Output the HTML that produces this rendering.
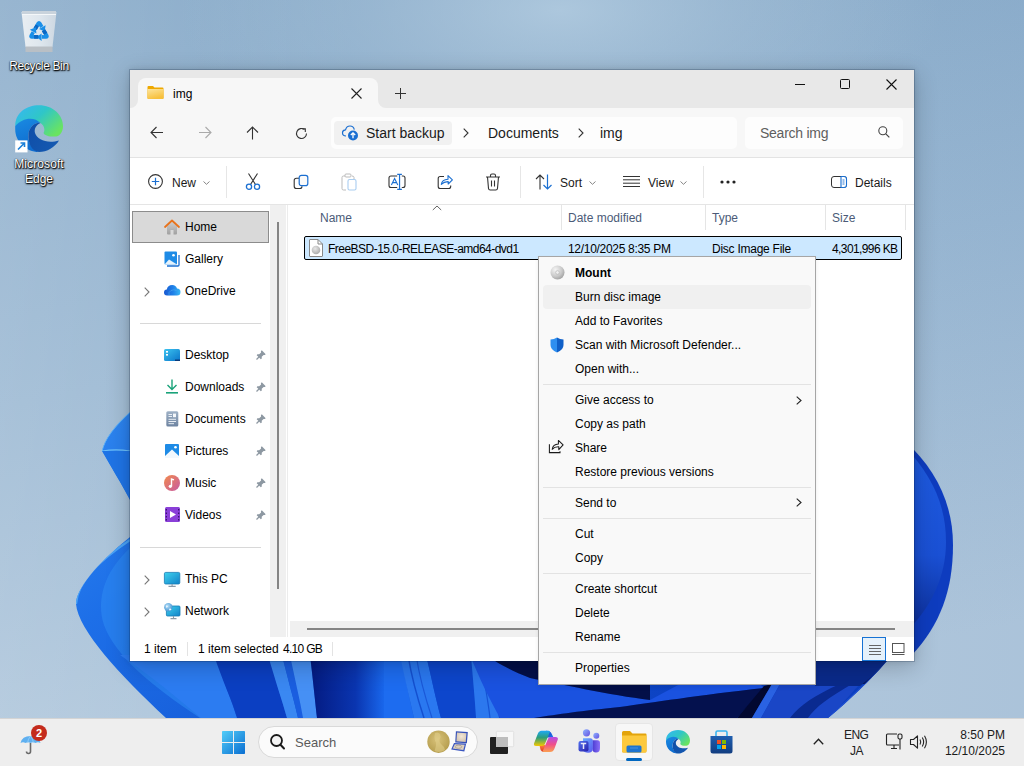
<!DOCTYPE html>
<html><head><meta charset="utf-8">
<style>
*{margin:0;padding:0;box-sizing:border-box}
html,body{width:1024px;height:766px;overflow:hidden}
body{position:relative;font-family:"Liberation Sans",sans-serif;font-size:12px;color:#1a1a1a;background:#9db8d1}
.a{position:absolute}
.t{position:absolute;white-space:nowrap;line-height:14px}
svg{position:absolute;overflow:visible}
#bg{left:0;top:0;width:1024px;height:766px}
#win{left:129px;top:69px;width:786px;height:593px;background:#fff;background-clip:padding-box;border:1px solid rgba(0,20,50,0.2);box-shadow:0 6px 22px rgba(0,0,0,0.2),0 0 6px rgba(0,0,0,0.1)}
#menu{left:538px;top:256px;width:278px;height:429px;background:#f9f9f9;border:1px solid #a6a6a6;box-shadow:0 2px 4px rgba(0,0,0,0.08)}
#taskbar{left:0;top:718px;width:1024px;height:48px;background:#eeeeee;border-top:1px solid #d4d4d4}
.dtxt{color:#fff;text-shadow:0 0 1px #000,0 1px 2px #000,1px 1px 1px rgba(0,0,0,0.85);font-size:12px;text-align:center}
</style></head><body>
<!-- desktop background -->
<svg id="bg" width="1024" height="766" viewBox="0 0 1024 766">
  <defs>
    <linearGradient id="dg" x1="0" y1="0" x2="0.25" y2="1">
      <stop offset="0" stop-color="#86a9c8"/>
      <stop offset="0.5" stop-color="#99b7d2"/>
      <stop offset="1" stop-color="#b0c7dc"/>
    </linearGradient>
    <linearGradient id="bl" x1="0" y1="0" x2="1" y2="0.6">
      <stop offset="0" stop-color="#3a96f5"/>
      <stop offset="0.35" stop-color="#1d6fe8"/>
      <stop offset="1" stop-color="#0b3fc0"/>
    </linearGradient>
    <linearGradient id="dk" x1="0" y1="0" x2="1" y2="0">
      <stop offset="0" stop-color="#0a2f9e"/>
      <stop offset="1" stop-color="#020a45"/>
    </linearGradient>
    <linearGradient id="dk2" x1="0" y1="0" x2="1" y2="0">
      <stop offset="0" stop-color="#041a80"/>
      <stop offset="0.6" stop-color="#0a35b0"/>
      <stop offset="1" stop-color="#1a6af0"/>
    </linearGradient>
    <linearGradient id="rp" x1="0" y1="0" x2="0" y2="1">
      <stop offset="0" stop-color="#1e5be0"/>
      <stop offset="0.6" stop-color="#1a50d4"/>
      <stop offset="1" stop-color="#0c2f9a"/>
    </linearGradient>
    <radialGradient id="glow" cx="560" cy="10" r="380" gradientUnits="userSpaceOnUse" gradientTransform="translate(560 10) scale(1 0.45) translate(-560 -10)">
      <stop offset="0" stop-color="#b0cadf" stop-opacity="0.9"/>
      <stop offset="0.5" stop-color="#a6c1d8" stop-opacity="0.5"/>
      <stop offset="1" stop-color="#a6c1d8" stop-opacity="0"/>
    </radialGradient>
    <linearGradient id="lx" x1="0" y1="0" x2="1" y2="0">
      <stop offset="0" stop-color="#ffffff" stop-opacity="0.15"/>
      <stop offset="0.35" stop-color="#ffffff" stop-opacity="0"/>
      <stop offset="1" stop-color="#3060a0" stop-opacity="0.04"/>
    </linearGradient>
    <linearGradient id="ws" x1="0" y1="0" x2="1" y2="0">
      <stop offset="0" stop-color="#000" stop-opacity="0"/>
      <stop offset="1" stop-color="#000" stop-opacity="0.12"/>
    </linearGradient>
  </defs>
  <rect width="1024" height="766" fill="url(#dg)"/>
  <rect width="1024" height="766" fill="url(#lx)"/>
  <rect width="1024" height="400" fill="url(#glow)"/>
  <!-- right petal -->
  <path d="M904 440 C937 470 953 505 953 545 C953 590 940 625 912 655 L600 655 L600 440 Z" fill="#0e3cbf"/>
  <path d="M904 446 C932 475 946 505 946 542 C946 575 932 605 910 628 L600 628 L600 446 Z" fill="url(#rp)"/>
  <!-- main bloom -->
  <clipPath id="bclip"><path d="M130 412 C115 425 104 440 102 451 C110 465 122 485 130 500 L130 537 C95 565 76 590 76 604 C78 630 120 675 166 718 L828 718 C850 700 870 680 887 661 L700 300 L130 300 Z"/></clipPath>
  <path d="M130 412 C115 425 104 440 102 451 C110 465 122 485 130 500 L130 537 C95 565 76 590 76 604 C78 630 120 675 166 718 L828 718 C850 700 870 680 887 661 L700 300 L130 300 Z" fill="url(#bl)"/>
  <g clip-path="url(#bclip)">
    <path d="M130 451 C118 449 108 450 102 451 C104 440 115 425 130 412" fill="none" stroke="#6cc0fa" stroke-width="1.2"/>
    <path d="M102 451 C110 465 122 485 130 500 L140 500 L140 451 Z" fill="#1f74e6"/>
    <path d="M76 604 C78 580 100 560 130 540" fill="none" stroke="#56b0fa" stroke-width="2.2" opacity="0.8"/>
    <path d="M130 548 C104 572 96 600 104 625 C115 655 150 685 200 718 L240 718 C190 690 140 650 130 620 Z" fill="#2d88f2" opacity="0.6"/>
    <!-- bottom strip -->
    <path d="M120 655 L216 655 C222 680 232 700 237 718 L201 718 C180 700 150 675 120 655 Z" fill="#2c7cf1"/>
    <path d="M214 655 L270 655 C275 680 282 700 287 718 L237 718 C232 700 222 680 214 655 Z" fill="#0b3fc2"/>
    <path d="M268 655 L282 655 C288 680 294 700 298 718 L287 718 C282 700 275 680 268 655 Z" fill="#3a88f2"/>
    <path d="M282 655 L290 655 C295 680 300 700 303 718 L298 718 C294 700 288 680 282 655 Z" fill="#1a5ee0"/>
    <path d="M290 655 L310 655 C313 680 315 700 317 718 L303 718 C300 700 295 680 290 655 Z" fill="#4690f5"/>
    <path d="M310 655 L386 655 L386 718 L317 718 C315 700 313 680 310 655 Z" fill="url(#dk2)"/>
    <path d="M384 655 L402 655 C405 680 410 700 414 718 L384 718 Z" fill="#1d6cf0"/>
    <path d="M400 655 L426 655 C432 680 436 700 441 718 L414 718 C410 700 405 680 400 655 Z" fill="#2a78f0"/>
    <path d="M408 655 C412 680 418 700 424 718" stroke="#1450d0" stroke-width="1.5" fill="none"/>
    <path d="M416 655 C420 680 426 700 432 718" stroke="#1a58d8" stroke-width="1.2" fill="none"/>
    <path d="M426 655 L471 655 C473 680 475 700 476 718 L441 718 C436 700 432 680 426 655 Z" fill="#0d46cc"/>
    <path d="M471 655 L489 655 C492 680 496 700 499 718 L476 718 C475 700 473 680 471 655 Z" fill="#2c78ee"/>
    <path d="M480 655 C484 680 488 700 490 718" stroke="#1654d4" stroke-width="1.2" fill="none"/>
    <path d="M470 655 L487 655 C495 662 510 670 530 678 C560 684 610 695 650 700 L680 684 L760 684 L764 688 C700 695 650 703 620 707 C580 711 560 714 534 718 L500 718 C490 700 480 680 470 655 Z" fill="#1a52e0"/>
    <path d="M487 655 L890 655 L870 684 L650 684 L650 700 C610 695 560 684 530 678 C510 670 495 662 487 655 Z" fill="#030f48"/>
    <path d="M534 718 C560 714 580 711 620 707 C650 703 700 695 764 688 L737 718 Z" fill="#04114e"/>
    <path d="M737 718 L764 686 L772 684 L752 718 Z" fill="#020830"/>
    <path d="M752 718 L772 684 L780 684 L761 718 Z" fill="#2a62e2"/>
    <path d="M761 718 L780 684 L860 684 L829 718 Z" fill="#1a46c6"/>
    <path d="M790 718 C800 705 815 695 840 684 L852 684 C830 697 815 707 808 718 Z" fill="#0a2a90"/>
    <path d="M815 661 L887 661 C878 672 868 680 860 686 L815 686 Z" fill="#0a2a8a"/>
    <path d="M887 661 C860 690 840 705 828 718 L834 718 C850 700 870 680 892 661 Z" fill="#2050d0"/>
  </g>
  <!-- shadow around window -->
</svg>

<!-- desktop icons -->
<div class="a" style="left:0;top:0;width:78px;height:80px">
  <svg width="78" height="80" viewBox="0 0 78 80">
    <defs><linearGradient id="bing" x1="0" y1="0" x2="1" y2="0"><stop offset="0" stop-color="#e9eef2"/><stop offset="0.5" stop-color="#dfe7ee"/><stop offset="1" stop-color="#cdd8e2"/></linearGradient></defs>
    <path d="M21.5 12 L56.5 12 L52.5 47 L25.5 47 Z" fill="url(#bing)"/>
    <path d="M22 11 L56 11 L56 14.5 L22 14.5 Z" fill="#c9d3dc"/>
    <path d="M22 14.5 L56 14.5" stroke="#f4f7f9" stroke-width="1"/>
    <rect x="25.5" y="46.5" width="27" height="5.5" fill="#b9bfc5"/>
    <g>
      <path d="M35.2 29 L38.2 23.5 Q39 22.2 39.8 23.5 L41.8 27" stroke="#1a8fe8" stroke-width="3.6" fill="none"/>
      <path d="M35.2 29 L37.2 25.3" stroke="#0b68c4" stroke-width="3.8" fill="none"/>
      <path d="M45.6 25.2 L39 29 L44.6 31.6 Z" fill="#1a8fe8"/>
    </g>
    <g transform="rotate(120 39 32)">
      <path d="M35.2 29 L38.2 23.5 Q39 22.2 39.8 23.5 L41.8 27" stroke="#1a8fe8" stroke-width="3.6" fill="none"/>
      <path d="M35.2 29 L37.2 25.3" stroke="#0b68c4" stroke-width="3.8" fill="none"/>
      <path d="M45.6 25.2 L39 29 L44.6 31.6 Z" fill="#1a8fe8"/>
    </g>
    <g transform="rotate(240 39 32)">
      <path d="M35.2 29 L38.2 23.5 Q39 22.2 39.8 23.5 L41.8 27" stroke="#1a8fe8" stroke-width="3.6" fill="none"/>
      <path d="M35.2 29 L37.2 25.3" stroke="#0b68c4" stroke-width="3.8" fill="none"/>
      <path d="M45.6 25.2 L39 29 L44.6 31.6 Z" fill="#1a8fe8"/>
    </g>
  </svg>
  <div class="t dtxt" style="left:0;top:59px;width:78px;letter-spacing:-0.35px">Recycle Bin</div>
</div>
<div class="a" style="left:0;top:100px;width:78px;height:90px">
  <svg style="left:12px;top:2px" width="54" height="54" viewBox="0 0 54 54">
    <defs>
      <linearGradient id="eg1" x1="0" y1="0" x2="1" y2="0.7"><stop offset="0" stop-color="#36b6f6"/><stop offset="0.5" stop-color="#2fc6c8"/><stop offset="1" stop-color="#6ae460"/></linearGradient>
      <linearGradient id="eg2" x1="0" y1="0" x2="0.3" y2="1"><stop offset="0" stop-color="#1a8ae2"/><stop offset="1" stop-color="#0e6ccf"/></linearGradient>
      <linearGradient id="eg3" x1="0" y1="0" x2="1" y2="0.5"><stop offset="0" stop-color="#0f4ea8"/><stop offset="1" stop-color="#1458b0"/></linearGradient>
    </defs>
    <path d="M3.2 24 C3.2 11 14 3.2 27 3.2 C41 3.2 51 13 51 24 C51 30 48 34 44 34.5 C39 35 33 34 31.5 31 C33 29 33 24 28.5 21 C23 17 12 18 3.2 24 Z" fill="url(#eg1)"/>
    <path d="M3.2 24 C10 16 22 14 28.5 21 C24 20 18 24 16.5 31 C15 40 20 47 27 50 C14 50 3.2 40 3.2 27 Z" fill="url(#eg2)"/>
    <path d="M16.5 31 C18 24 24 20 28.5 21 C24 23 22 27 23 31 C25 38 36 42 47 38.4 C43 45 35 50 27 50 C20 49 15.5 42 16.5 31 Z" fill="url(#eg3)"/>
    <rect x="3.2" y="38.4" width="12.3" height="12" fill="#fff"/>
    <path d="M6 47.5 L12.5 41 M8.5 41 L12.5 41 L12.5 45" stroke="#1a7fd8" stroke-width="1.6" fill="none"/>
  </svg>
  <div class="t dtxt" style="left:0;top:57px;width:78px;letter-spacing:0.1px">Microsoft</div>
  <div class="t dtxt" style="left:0;top:72px;width:78px">Edge</div>
</div>

<!-- explorer window -->
<div id="win" class="a"></div>
<div class="a" style="left:130px;top:70px;width:784px;height:38px;background:#e8e8e8"></div>
<div class="a" style="left:130px;top:100px;width:256px;height:8px;background:#f7f7f7"></div>
<div class="a" style="left:130px;top:98px;width:8px;height:10px;background:#e8e8e8;border-radius:0 0 8px 0"></div>
<div class="a" style="left:378px;top:98px;width:8px;height:10px;background:#e8e8e8;border-radius:0 0 0 8px"></div>
<div class="a" style="left:138px;top:78px;width:240px;height:30px;background:#f7f7f7;border-radius:8px 8px 0 0"></div>
<!-- tab folder icon -->
<svg style="left:147px;top:85px" width="17" height="15" viewBox="0 0 17 15"><defs><linearGradient id="fdg" x1="0" y1="0" x2="0.4" y2="1"><stop offset="0" stop-color="#fde49a"/><stop offset="1" stop-color="#f7c03c"/></linearGradient></defs>
  <path d="M0.5 2 Q0.5 1 1.5 1 L6 1 L7.5 2.5 L15.5 2.5 Q16.5 2.5 16.5 3.5 L16.5 13 Q16.5 14 15.5 14 L1.5 14 Q0.5 14 0.5 13 Z" fill="#eea800"/>
  <path d="M0.5 4 L16.5 4 L16.5 13 Q16.5 14 15.5 14 L1.5 14 Q0.5 14 0.5 13 Z" fill="url(#fdg)"/>
</svg>
<div class="t" style="left:173px;top:87px;font-size:12px;color:#000">img</div>
<svg style="left:351px;top:88px" width="11" height="11" viewBox="0 0 11 11"><path d="M0.5 0.5 L10.5 10.5 M10.5 0.5 L0.5 10.5" stroke="#222" stroke-width="1.1"/></svg>
<svg style="left:395px;top:88px" width="11" height="11" viewBox="0 0 11 11"><path d="M5.5 0 L5.5 11 M0 5.5 L11 5.5" stroke="#333" stroke-width="1"/></svg>
<!-- window controls -->
<div class="a" style="left:795px;top:84px;width:10px;height:1px;background:#111"></div>
<div class="a" style="left:840px;top:79px;width:10px;height:10px;border:1px solid #111;border-radius:1.5px"></div>
<svg style="left:886px;top:79px" width="11" height="11" viewBox="0 0 11 11"><path d="M0.5 0.5 L10.5 10.5 M10.5 0.5 L0.5 10.5" stroke="#111" stroke-width="1.1"/></svg>

<!-- address row -->
<div class="a" style="left:130px;top:108px;width:784px;height:49px;background:#f7f7f7"></div>
<div class="a" style="left:130px;top:157px;width:784px;height:1px;background:#e3e3e3"></div>
<svg style="left:150px;top:126px" width="14" height="13" viewBox="0 0 14 13"><path d="M13 6.5 L1 6.5 M6.5 1 L1 6.5 L6.5 12" stroke="#333" stroke-width="1.1" fill="none"/></svg>
<svg style="left:198px;top:126px" width="14" height="13" viewBox="0 0 14 13"><path d="M1 6.5 L13 6.5 M7.5 1 L13 6.5 L7.5 12" stroke="#aaa" stroke-width="1.1" fill="none"/></svg>
<svg style="left:246px;top:126px" width="13" height="14" viewBox="0 0 13 14"><path d="M6.5 13.5 L6.5 1 M1 6.5 L6.5 1 L12 6.5" stroke="#333" stroke-width="1.1" fill="none"/></svg>
<svg style="left:295px;top:127px" width="13" height="13" viewBox="0 0 13 13"><path d="M11.5 6.5 A5 5 0 1 1 9.5 2.5" stroke="#333" stroke-width="1.1" fill="none"/><path d="M7 1.8 L10.3 1.8 L10.3 5" stroke="#333" stroke-width="1.1" fill="none"/></svg>
<div class="a" style="left:331px;top:117px;width:406px;height:32px;background:#fdfdfd;border-radius:5px"></div>
<div class="a" style="left:334px;top:121px;width:118px;height:24px;background:#f1f1f1;border-radius:4px"></div>
<svg style="left:342px;top:124px" width="17" height="17" viewBox="0 0 17 17">
  <path d="M4 12 Q0.5 12 0.5 8.8 Q0.5 6 3.5 5.8 Q4.5 2 8 2 Q11.5 2 12.3 5.6" stroke="#1b6fd1" stroke-width="1.2" fill="none"/>
  <circle cx="11" cy="11.5" r="5" fill="#1b6fd1"/>
  <path d="M11 14.2 L11 9 M8.8 11 L11 8.8 L13.2 11" stroke="#fff" stroke-width="1.3" fill="none"/>
</svg>
<div class="t" style="left:366px;top:125px;font-size:14px;line-height:16px;color:#1a1a1a">Start backup</div>
<svg style="left:463px;top:128px" width="6" height="10" viewBox="0 0 6 10"><path d="M0.7 0.7 L5 5 L0.7 9.3" stroke="#333" stroke-width="1.1" fill="none"/></svg>
<div class="t" style="left:488px;top:125px;font-size:14px;line-height:16px;color:#1a1a1a">Documents</div>
<svg style="left:578px;top:128px" width="6" height="10" viewBox="0 0 6 10"><path d="M0.7 0.7 L5 5 L0.7 9.3" stroke="#333" stroke-width="1.1" fill="none"/></svg>
<div class="t" style="left:600px;top:125px;font-size:14px;line-height:16px;color:#1a1a1a">img</div>
<div class="a" style="left:745px;top:117px;width:158px;height:32px;background:#fdfdfd;border-radius:5px"></div>
<div class="t" style="left:760px;top:125px;font-size:14px;line-height:16px;color:#5f5f5f;letter-spacing:-0.25px">Search img</div>
<svg style="left:878px;top:126px" width="12" height="12" viewBox="0 0 12 12"><circle cx="4.8" cy="4.8" r="4" stroke="#444" stroke-width="1.1" fill="none"/><path d="M7.8 7.8 L11.3 11.3" stroke="#444" stroke-width="1.2"/></svg>

<!-- toolbar -->
<div class="a" style="left:130px;top:158px;width:784px;height:46px;background:#ffffff"></div>
<div class="a" style="left:130px;top:204px;width:784px;height:1px;background:#e5e5e5"></div>
<!-- toolbar items -->
<svg style="left:148px;top:174px" width="15" height="15" viewBox="0 0 15 15"><circle cx="7.5" cy="7.5" r="6.9" stroke="#333" stroke-width="1.1" fill="none"/><path d="M7.5 3.8 L7.5 11.2 M3.8 7.5 L11.2 7.5" stroke="#1b6fd1" stroke-width="1.2"/></svg>
<div class="t" style="left:172px;top:176px">New</div>
<svg style="left:203px;top:181px" width="7" height="4" viewBox="0 0 7 4"><path d="M0.5 0.5 L3.5 3.3 L6.5 0.5" stroke="#777" stroke-width="0.9" fill="none"/></svg>
<div class="a" style="left:226px;top:166px;width:1px;height:32px;background:#e6e6e6"></div>
<svg style="left:245px;top:173px" width="16" height="17" viewBox="0 0 16 17"><path d="M3.5 0.5 L10.5 11.5 M12.5 0.5 L5.5 11.5" stroke="#333" stroke-width="1.1"/><circle cx="4" cy="13.7" r="2.6" stroke="#1b6fd1" stroke-width="1.3" fill="#fff"/><circle cx="12" cy="13.7" r="2.6" stroke="#1b6fd1" stroke-width="1.3" fill="#fff"/></svg>
<svg style="left:293px;top:173px" width="16" height="17" viewBox="0 0 16 17"><path d="M6 5.3 L3.5 5.3 Q1.2 5.3 1.2 7.6 L1.2 13.2 Q1.2 15.5 3.5 15.5 L6.8 15.5 Q9 15.5 9 13.2" stroke="#333" stroke-width="1.1" fill="none"/><rect x="6.2" y="2.3" width="8.6" height="10.3" rx="2.2" stroke="#1b6fd1" stroke-width="1.2" fill="#fafafa"/></svg>
<svg style="left:341px;top:173px" width="16" height="18" viewBox="0 0 16 18"><path d="M4 3 L2.5 3 Q1 3 1 4.5 L1 15.5 Q1 17 2.5 17 L5 17" stroke="#bbb" stroke-width="1" fill="none"/><rect x="4" y="1" width="6" height="3" rx="1" stroke="#bbb" stroke-width="1" fill="none"/><path d="M11 3 Q13 3 13 4.5 L13 6" stroke="#bbb" stroke-width="1" fill="none"/><rect x="7" y="6.5" width="8" height="10.5" rx="1.5" stroke="#a9cdf0" stroke-width="1.1" fill="#fff"/></svg>
<svg style="left:388px;top:173px" width="18" height="18" viewBox="0 0 18 18"><path d="M9.2 3 L3 3 Q1 3 1 5 L1 12.5 Q1 14.5 3 14.5 L9.2 14.5 M13.8 3 L15 3 Q17 3 17 5 L17 12.5 Q17 14.5 15 14.5 L13.8 14.5" stroke="#333" stroke-width="1.1" fill="none"/><path d="M9.2 1.3 L13.9 1.3 M11.55 1.3 L11.55 16.4 M9.2 16.4 L13.9 16.4" stroke="#1b6fd1" stroke-width="1.2"/><path d="M3.4 11.9 L6.6 5.5 L9.8 11.9 M4.6 9.6 L8.6 9.6" stroke="#1b6fd1" stroke-width="1.1" fill="none"/></svg>
<svg style="left:437px;top:173px" width="17" height="17" viewBox="0 0 17 17"><path d="M7 3.5 L3.2 3.5 Q1.2 3.5 1.2 5.5 L1.2 13.5 Q1.2 15.5 3.2 15.5 L11.7 15.5 Q13.7 15.5 13.7 13.5 L13.7 12.6" stroke="#333" stroke-width="1.1" fill="none"/><path d="M4.3 11.4 Q5 6.5 11 6.2 L11 2.6 L15.4 6.8 L11.2 11 L11.2 8.6 Q7 8.5 4.3 11.4 Z" stroke="#1b6fd1" stroke-width="1.1" fill="none" stroke-linejoin="round"/></svg>
<svg style="left:485px;top:173px" width="16" height="18" viewBox="0 0 16 18"><path d="M1 4 L15 4 M5.5 4 L5.5 2.5 Q5.5 1 7 1 L9 1 Q10.5 1 10.5 2.5 L10.5 4 M2.5 4 L3.5 15.5 Q3.7 17 5.2 17 L10.8 17 Q12.3 17 12.5 15.5 L13.5 4 M6.5 7.5 L6.5 13.5 M9.5 7.5 L9.5 13.5" stroke="#333" stroke-width="1.1" fill="none"/></svg>
<div class="a" style="left:520px;top:166px;width:1px;height:32px;background:#e6e6e6"></div>
<svg style="left:535px;top:174px" width="18" height="16" viewBox="0 0 18 16"><path d="M5 15.5 L5 1 M1 5 L5 1 L9 5" stroke="#333" stroke-width="1.1" fill="none"/><path d="M12.5 0.5 L12.5 15 M8.5 11 L12.5 15 L16.5 11" stroke="#1b6fd1" stroke-width="1.2" fill="none"/></svg>
<div class="t" style="left:560px;top:176px">Sort</div>
<svg style="left:589px;top:181px" width="7" height="4" viewBox="0 0 7 4"><path d="M0.5 0.5 L3.5 3.3 L6.5 0.5" stroke="#777" stroke-width="0.9" fill="none"/></svg>
<svg style="left:623px;top:176px" width="17" height="12" viewBox="0 0 17 12"><path d="M0 0.5 L17 0.5 M0 3.8 L17 3.8 M0 7.2 L17 7.2 M0 10.5 L17 10.5" stroke="#333" stroke-width="1"/></svg>
<div class="t" style="left:648px;top:176px">View</div>
<svg style="left:680px;top:181px" width="7" height="4" viewBox="0 0 7 4"><path d="M0.5 0.5 L3.5 3.3 L6.5 0.5" stroke="#777" stroke-width="0.9" fill="none"/></svg>
<div class="a" style="left:703px;top:166px;width:1px;height:32px;background:#e6e6e6"></div>
<svg style="left:720px;top:180px" width="16" height="4" viewBox="0 0 16 4"><circle cx="2" cy="2" r="1.6" fill="#222"/><circle cx="8" cy="2" r="1.6" fill="#222"/><circle cx="14" cy="2" r="1.6" fill="#222"/></svg>
<svg style="left:831px;top:176px" width="16" height="12" viewBox="0 0 16 12"><rect x="0.5" y="0.5" width="15" height="11" rx="2.5" stroke="#333" stroke-width="1" fill="none"/><path d="M10 0.5 L13 0.5 Q15.5 0.5 15.5 3 L15.5 9 Q15.5 11.5 13 11.5 L10 11.5 Z" stroke="#1b6fd1" stroke-width="1.1" fill="#fff"/><path d="M11.5 4 L13.5 4 M11.5 6 L13.5 6 M11.5 8 L13.5 8" stroke="#1b6fd1" stroke-width="0.9"/></svg>
<div class="t" style="left:855px;top:176px">Details</div>

<!-- body -->
<div class="a" style="left:270px;top:205px;width:16px;height:432px;background:#f0f0f0"></div>
<div class="a" style="left:277px;top:222px;width:2px;height:367px;background:#858585"></div>
<div class="a" style="left:287px;top:205px;width:1px;height:432px;background:#ececec"></div>
<div class="a" style="left:290px;top:621px;width:624px;height:16px;background:#f0f0f0"></div>
<div class="a" style="left:307px;top:628px;width:588px;height:2px;background:#858585"></div>
<!-- nav pane -->
<div class="a" style="left:132px;top:211px;width:137px;height:32px;background:#d9d9d9;border:1px solid #8c8c8c"></div>
<svg style="left:164px;top:219px" width="16" height="16" viewBox="0 0 16 16"><defs><linearGradient id="hg" x1="0" y1="0" x2="0" y2="1"><stop offset="0" stop-color="#d0d0d0"/><stop offset="1" stop-color="#a0a0a0"/></linearGradient></defs><path d="M3 7 L3 14.5 Q3 15.5 4 15.5 L6.5 15.5 L6.5 11 L9.5 11 L9.5 15.5 L12 15.5 Q13 15.5 13 14.5 L13 7 L8 2.5 Z" fill="url(#hg)"/><path d="M1 8 L8 1.5 L15 8" stroke="#e8731c" stroke-width="1.8" fill="none" stroke-linecap="round" stroke-linejoin="round"/></svg>
<div class="t" style="left:185px;top:220px;color:#000">Home</div>
<svg style="left:164px;top:251px" width="16" height="16" viewBox="0 0 16 16"><path d="M3 15 L14 15 Q15 15 15 14 L15 4" stroke="#1b6fd1" stroke-width="1.3" fill="none"/><rect x="0.5" y="0.5" width="12.5" height="13" rx="1" fill="#1e8be6"/><path d="M0.5 13.5 L5 8.5 L9 11 L13 13.5 Z" fill="#e6f2fb"/><circle cx="9.5" cy="4.2" r="1.3" fill="#fff"/></svg>
<div class="t" style="left:185px;top:252px;color:#000">Gallery</div>
<svg style="left:144px;top:287px" width="6" height="10" viewBox="0 0 6 10"><path d="M0.7 0.7 L5 5 L0.7 9.3" stroke="#777" stroke-width="1.1" fill="none"/></svg>
<svg style="left:164px;top:284px" width="17" height="12" viewBox="0 0 17 12"><defs><linearGradient id="odg" x1="0" y1="0" x2="1" y2="0"><stop offset="0" stop-color="#1858d0"/><stop offset="0.55" stop-color="#1e80e8"/><stop offset="1" stop-color="#38b8f5"/></linearGradient></defs><path d="M3 11.5 Q0 11.5 0 8.5 Q0 5.8 2.8 5.6 Q3.6 1 8.2 1 Q12 1 13 4.5 Q16.5 4.8 16.5 8 Q16.5 11.5 13 11.5 Z" fill="url(#odg)"/><path d="M5 11.5 Q4 8 7 6.5 Q10 5 12.5 6.5" stroke="#5ab0f0" stroke-width="0.8" fill="none" opacity="0.6"/></svg>
<div class="t" style="left:185px;top:284px;color:#000">OneDrive</div>
<div class="a" style="left:140px;top:323px;width:121px;height:1px;background:#d8d8d8"></div>

<svg style="left:164px;top:349px" width="16" height="12" viewBox="0 0 16 12"><defs><linearGradient id="dkg" x1="0" y1="0" x2="1" y2="1"><stop offset="0" stop-color="#3cc4f0"/><stop offset="1" stop-color="#0a74c9"/></linearGradient></defs><rect x="0" y="0" width="16" height="12" rx="1.5" fill="url(#dkg)"/><rect x="2" y="2" width="2" height="1.6" fill="#fff"/><rect x="2" y="5" width="2" height="1.6" fill="#fff"/><rect x="11" y="10.5" width="5" height="1.5" fill="#0a3a7a"/></svg>
<div class="t" style="left:185px;top:348px;color:#000">Desktop</div>
<svg style="left:165px;top:379px" width="14" height="15" viewBox="0 0 14 15"><path d="M7 0.5 L7 10.5 M2.5 6 L7 10.5 L11.5 6" stroke="#1aa37a" stroke-width="1.4" fill="none"/><rect x="1" y="13" width="12" height="1.6" fill="#1aa37a"/></svg>
<div class="t" style="left:185px;top:380px;color:#000">Downloads</div>
<svg style="left:166px;top:411px" width="13" height="16" viewBox="0 0 13 16"><defs><linearGradient id="dcg" x1="0" y1="0" x2="0" y2="1"><stop offset="0" stop-color="#9fb1c6"/><stop offset="1" stop-color="#6d83a0"/></linearGradient></defs><rect x="0.3" y="0.3" width="12" height="15.2" rx="1.5" fill="url(#dcg)"/><path d="M2.5 3.5 L6 3.5 M2.5 5.5 L6 5.5 M2.5 8.3 L10 8.3 M2.5 10.5 L10 10.5 M2.5 12.7 L8 12.7" stroke="#f4f7fa" stroke-width="0.9"/><rect x="7" y="2.6" width="3" height="3.6" fill="#f4f7fa"/></svg>
<div class="t" style="left:185px;top:412px;color:#000">Documents</div>
<svg style="left:165px;top:444px" width="14" height="14" viewBox="0 0 14 14"><rect x="0" y="0" width="14" height="14" rx="1" fill="#1e8be6"/><path d="M0 14 L0 12 L7 5.5 L14 12 L14 14 Z" fill="#f2f8fd"/><circle cx="10.5" cy="3.3" r="1.3" fill="#fff"/></svg>
<div class="t" style="left:185px;top:444px;color:#000">Pictures</div>
<svg style="left:164px;top:475px" width="16" height="16" viewBox="0 0 16 16"><defs><linearGradient id="mg" x1="0" y1="0" x2="1" y2="1"><stop offset="0" stop-color="#f28a4c"/><stop offset="1" stop-color="#c75aa3"/></linearGradient></defs><circle cx="8" cy="8" r="8" fill="url(#mg)"/><path d="M7.5 11.5 L7.5 4 L10 4.8" stroke="#fff" stroke-width="1.4" fill="none"/><circle cx="6.3" cy="11.3" r="1.6" fill="#fff"/></svg>
<div class="t" style="left:185px;top:476px;color:#000">Music</div>
<svg style="left:165px;top:507px" width="15" height="15" viewBox="0 0 15 15"><rect x="0" y="0" width="15" height="15" rx="1.5" fill="#8a3fd8"/><path d="M5 4 L11 7.5 L5 11 Z" fill="#fff"/><path d="M1.3 2 L1.3 3.5 M1.3 5.5 L1.3 7 M1.3 9 L1.3 10.5 M1.3 12 L1.3 13.5 M13.7 2 L13.7 3.5 M13.7 5.5 L13.7 7 M13.7 9 L13.7 10.5 M13.7 12 L13.7 13.5" stroke="#2d0f5e" stroke-width="1.1"/></svg>
<div class="t" style="left:185px;top:508px;color:#000">Videos</div>
<svg style="left:256px;top:350px" width="10" height="10" viewBox="0 0 10 10"><path d="M5.8 0.3 L9.7 4.2 L8.8 5.1 L7.6 4.9 L5.7 6.8 L5.8 8.6 L4.8 9.3 L0.7 5.2 L1.4 4.2 L3.2 4.3 L5.1 2.4 L4.9 1.2 Z" fill="#8d98a2"/><path d="M3 7 L0.5 9.5" stroke="#8d98a2" stroke-width="1.3"/></svg>
<svg style="left:256px;top:382px" width="10" height="10" viewBox="0 0 10 10"><path d="M5.8 0.3 L9.7 4.2 L8.8 5.1 L7.6 4.9 L5.7 6.8 L5.8 8.6 L4.8 9.3 L0.7 5.2 L1.4 4.2 L3.2 4.3 L5.1 2.4 L4.9 1.2 Z" fill="#8d98a2"/><path d="M3 7 L0.5 9.5" stroke="#8d98a2" stroke-width="1.3"/></svg>
<svg style="left:256px;top:414px" width="10" height="10" viewBox="0 0 10 10"><path d="M5.8 0.3 L9.7 4.2 L8.8 5.1 L7.6 4.9 L5.7 6.8 L5.8 8.6 L4.8 9.3 L0.7 5.2 L1.4 4.2 L3.2 4.3 L5.1 2.4 L4.9 1.2 Z" fill="#8d98a2"/><path d="M3 7 L0.5 9.5" stroke="#8d98a2" stroke-width="1.3"/></svg>
<svg style="left:256px;top:446px" width="10" height="10" viewBox="0 0 10 10"><path d="M5.8 0.3 L9.7 4.2 L8.8 5.1 L7.6 4.9 L5.7 6.8 L5.8 8.6 L4.8 9.3 L0.7 5.2 L1.4 4.2 L3.2 4.3 L5.1 2.4 L4.9 1.2 Z" fill="#8d98a2"/><path d="M3 7 L0.5 9.5" stroke="#8d98a2" stroke-width="1.3"/></svg>
<svg style="left:256px;top:478px" width="10" height="10" viewBox="0 0 10 10"><path d="M5.8 0.3 L9.7 4.2 L8.8 5.1 L7.6 4.9 L5.7 6.8 L5.8 8.6 L4.8 9.3 L0.7 5.2 L1.4 4.2 L3.2 4.3 L5.1 2.4 L4.9 1.2 Z" fill="#8d98a2"/><path d="M3 7 L0.5 9.5" stroke="#8d98a2" stroke-width="1.3"/></svg>
<svg style="left:256px;top:510px" width="10" height="10" viewBox="0 0 10 10"><path d="M5.8 0.3 L9.7 4.2 L8.8 5.1 L7.6 4.9 L5.7 6.8 L5.8 8.6 L4.8 9.3 L0.7 5.2 L1.4 4.2 L3.2 4.3 L5.1 2.4 L4.9 1.2 Z" fill="#8d98a2"/><path d="M3 7 L0.5 9.5" stroke="#8d98a2" stroke-width="1.3"/></svg>
<div class="a" style="left:140px;top:547px;width:121px;height:1px;background:#d8d8d8"></div>
<svg style="left:144px;top:575px" width="6" height="10" viewBox="0 0 6 10"><path d="M0.7 0.7 L5 5 L0.7 9.3" stroke="#777" stroke-width="1.1" fill="none"/></svg>
<svg style="left:164px;top:571px" width="17" height="17" viewBox="0 0 17 17"><defs><linearGradient id="pcg" x1="0" y1="0" x2="1" y2="1"><stop offset="0" stop-color="#3fd2ee"/><stop offset="1" stop-color="#1282c8"/></linearGradient></defs><rect x="0.4" y="1.4" width="15.4" height="11.6" rx="1.3" fill="url(#pcg)" stroke="#157bb5" stroke-width="0.8"/><path d="M8.1 13 L8.1 15 M4.5 15.4 L11.7 15.4" stroke="#8a9aa8" stroke-width="1.1"/></svg>
<div class="t" style="left:185px;top:572px;color:#000">This PC</div>
<svg style="left:144px;top:607px" width="6" height="10" viewBox="0 0 6 10"><path d="M0.7 0.7 L5 5 L0.7 9.3" stroke="#777" stroke-width="1.1" fill="none"/></svg>
<svg style="left:164px;top:602px" width="17" height="18" viewBox="0 0 17 18"><defs><radialGradient id="glb" cx="0.4" cy="0.35" r="0.7"><stop offset="0" stop-color="#b8e0f8"/><stop offset="1" stop-color="#3a8ed0"/></radialGradient></defs><rect x="2.4" y="4" width="13.6" height="10" rx="1" fill="url(#pcg)" stroke="#157bb5" stroke-width="0.8"/><path d="M9.5 14 L9.5 16.3 M6.5 16.6 L12.5 16.6" stroke="#8a9aa8" stroke-width="1.1"/><circle cx="4.3" cy="5.3" r="4.2" fill="url(#glb)"/><path d="M2 3.5 Q3.5 3 4 4.5 Q3 6 2.2 5.5 Z M5.5 6.5 Q7 6 7.5 7.5 Q6 9 5 8 Z" fill="#eaf6fd"/></svg>
<div class="t" style="left:185px;top:604px;color:#000">Network</div>
<!-- file list header -->
<svg style="left:432px;top:205px" width="10" height="6" viewBox="0 0 10 6"><path d="M0.8 5 L5 1 L9.2 5" stroke="#666" stroke-width="1" fill="none"/></svg>
<div class="t" style="left:320px;top:211px;color:#4b5b78">Name</div>
<div class="a" style="left:561px;top:205px;width:1px;height:25px;background:#e5e5e5"></div>
<div class="t" style="left:568px;top:211px;color:#4b5b78">Date modified</div>
<div class="a" style="left:705px;top:205px;width:1px;height:25px;background:#e5e5e5"></div>
<div class="t" style="left:712px;top:211px;color:#4b5b78">Type</div>
<div class="a" style="left:825px;top:205px;width:1px;height:25px;background:#e5e5e5"></div>
<div class="t" style="left:832px;top:211px;color:#4b5b78">Size</div>
<div class="a" style="left:905px;top:205px;width:1px;height:25px;background:#e5e5e5"></div>
<!-- selected row -->
<div class="a" style="left:304px;top:236px;width:598px;height:24px;background:#cce8ff;border:1px solid #000;border-radius:2px"></div>
<svg style="left:309px;top:239px" width="14" height="18" viewBox="0 0 14 18"><path d="M1 0.5 L9 0.5 L13.5 5 L13.5 17 Q13.5 17.5 13 17.5 L1 17.5 Q0.5 17.5 0.5 17 L0.5 1 Q0.5 0.5 1 0.5 Z" fill="#fff" stroke="#888" stroke-width="1"/><path d="M9 0.5 L9 5 L13.5 5" fill="none" stroke="#888" stroke-width="1"/><defs><radialGradient id="cdg" cx="0.4" cy="0.35" r="0.7"><stop offset="0" stop-color="#e8e8e8"/><stop offset="1" stop-color="#a8a8a8"/></radialGradient></defs><circle cx="7" cy="11" r="4.3" fill="url(#cdg)"/></svg>
<div class="t" style="left:328px;top:242px;color:#000;letter-spacing:-0.52px">FreeBSD-15.0-RELEASE-amd64-dvd1</div>
<div class="t" style="left:568px;top:242px;color:#000;letter-spacing:-0.3px">12/10/2025 8:35 PM</div>
<div class="t" style="left:712px;top:242px;color:#000;letter-spacing:-0.25px">Disc Image File</div>
<div class="t" style="left:832px;top:242px;color:#000;letter-spacing:-0.6px">4,301,996 KB</div>
<!-- status bar -->
<div class="t" style="left:144px;top:642px;color:#000">1 item</div>
<div class="a" style="left:187px;top:642px;width:1px;height:14px;background:#e3e3e3"></div>
<div class="t" style="left:198px;top:642px;color:#000">1 item selected</div>
<div class="t" style="left:283px;top:642px;color:#000;letter-spacing:-0.7px">4.10 GB</div>
<div class="a" style="left:332px;top:642px;width:1px;height:14px;background:#e3e3e3"></div>
<div class="a" style="left:862px;top:637px;width:24px;height:24px;background:#e5f1fb;border:1.5px solid #1672d4"></div>
<svg style="left:869px;top:645px" width="12" height="10" viewBox="0 0 12 10"><path d="M0 0.5 L12 0.5 M0 3.5 L12 3.5 M0 6.5 L12 6.5 M0 9.5 L12 9.5" stroke="#555" stroke-width="0.9"/></svg>
<svg style="left:892px;top:643px" width="13" height="12" viewBox="0 0 13 12"><rect x="0.5" y="0.5" width="11.5" height="9" fill="none" stroke="#555" stroke-width="1"/><path d="M0 11.5 L12.5 11.5" stroke="#555" stroke-width="1"/></svg>


<!-- context menu -->
<div id="menu" class="a"></div>
<div class="a" style="left:543px;top:285px;width:268px;height:24px;background:#f0f0f0;border-radius:4px"></div>
<div class="t" style="left:575px;top:265.8px;color:#000;font-weight:bold;">Mount</div>
<div class="t" style="left:575px;top:289.8px;color:#000;">Burn disc image</div>
<div class="t" style="left:575px;top:313.8px;color:#000;">Add to Favorites</div>
<div class="t" style="left:575px;top:337.8px;color:#000;">Scan with Microsoft Defender...</div>
<div class="t" style="left:575px;top:361.8px;color:#000;">Open with...</div>
<div class="t" style="left:575px;top:392.8px;color:#000;">Give access to</div>
<div class="t" style="left:575px;top:416.8px;color:#000;">Copy as path</div>
<div class="t" style="left:575px;top:440.8px;color:#000;">Share</div>
<div class="t" style="left:575px;top:464.8px;color:#000;">Restore previous versions</div>
<div class="t" style="left:575px;top:495.8px;color:#000;">Send to</div>
<div class="t" style="left:575px;top:526.8px;color:#000;">Cut</div>
<div class="t" style="left:575px;top:550.8px;color:#000;">Copy</div>
<div class="t" style="left:575px;top:581.8px;color:#000;">Create shortcut</div>
<div class="t" style="left:575px;top:605.8px;color:#000;">Delete</div>
<div class="t" style="left:575px;top:629.8px;color:#000;">Rename</div>
<div class="t" style="left:575px;top:660.8px;color:#000;">Properties</div>
<div class="a" style="left:543px;top:384px;width:268px;height:1px;background:#e3e3e3"></div>
<div class="a" style="left:543px;top:487px;width:268px;height:1px;background:#e3e3e3"></div>
<div class="a" style="left:543px;top:518px;width:268px;height:1px;background:#e3e3e3"></div>
<div class="a" style="left:543px;top:573px;width:268px;height:1px;background:#e3e3e3"></div>
<div class="a" style="left:543px;top:652px;width:268px;height:1px;background:#e3e3e3"></div>
<svg style="left:796px;top:396px" width="6" height="9" viewBox="0 0 6 9"><path d="M0.7 0.7 L5 4.5 L0.7 8.3" stroke="#222" stroke-width="1.1" fill="none"/></svg>
<svg style="left:796px;top:498px" width="6" height="9" viewBox="0 0 6 9"><path d="M0.7 0.7 L5 4.5 L0.7 8.3" stroke="#222" stroke-width="1.1" fill="none"/></svg>
<svg style="left:550px;top:265px" width="15" height="15" viewBox="0 0 15 15"><defs><radialGradient id="cd2" cx="0.35" cy="0.3" r="0.8"><stop offset="0" stop-color="#f4f4f4"/><stop offset="0.6" stop-color="#c8c8c8"/><stop offset="1" stop-color="#9a9a9a"/></radialGradient></defs><circle cx="7.5" cy="7.5" r="7" fill="url(#cd2)"/><circle cx="7.5" cy="7.5" r="1.8" fill="#f0f0f0" stroke="#b0b0b0" stroke-width="0.6"/></svg>
<svg style="left:550px;top:337px" width="14" height="16" viewBox="0 0 14 16"><defs><linearGradient id="shg" x1="0" y1="0" x2="1" y2="0"><stop offset="0" stop-color="#2e8ff0"/><stop offset="0.5" stop-color="#2e8ff0"/><stop offset="0.5" stop-color="#1060c8"/><stop offset="1" stop-color="#1060c8"/></linearGradient></defs><path d="M7 0.5 Q10 2.5 13.5 2.5 L13.5 8 Q13.5 13 7 15.5 Q0.5 13 0.5 8 L0.5 2.5 Q4 2.5 7 0.5 Z" fill="url(#shg)"/></svg>
<svg style="left:548px;top:438px" width="17" height="16" viewBox="0 0 17 16"><path d="M1.4 6.2 L1.4 14.6 L12 14.6 L12 13.2" stroke="#1a1a1a" stroke-width="1.05" fill="none"/><path d="M4.2 11.3 Q5 6.3 10.4 6 L10.4 2.4 L15.1 6.9 L10.8 11.6 L10.8 8.8 Q6.5 8.6 4.2 11.3 Z" stroke="#1a1a1a" stroke-width="1.05" fill="none" stroke-linejoin="round"/></svg>

<!-- taskbar -->
<div id="taskbar" class="a"></div>
<!-- weather -->
<svg style="left:20px;top:735px" width="22" height="20" viewBox="0 0 22 20"><path d="M0.5 8 Q2 1 10.5 1 Q19 1 20.5 8 Q18 6.5 15.5 8 Q13 6.5 10.5 8 Q8 6.5 5.5 8 Q3 6.5 0.5 8 Z" fill="#5fb0f0"/><path d="M10.5 1 Q8 4 7.5 8 M10.5 1 Q13 4 13.5 8" stroke="#9ad0f8" stroke-width="0.8" fill="none"/><path d="M10.5 8 L10.5 16.5 Q10.5 18.5 8.5 18.5 Q6.5 18.5 6.5 16.5" stroke="#6a6a6a" stroke-width="1.6" fill="none"/></svg>
<div class="a" style="left:31px;top:725px;width:16px;height:16px;border-radius:50%;background:#c42b1c"></div>
<div class="t" style="left:31px;top:726px;width:16px;text-align:center;font-size:11px;font-weight:bold;color:#fff;line-height:14px">2</div>
<!-- start -->
<svg style="left:222px;top:731px" width="23" height="23" viewBox="0 0 23 23"><defs><linearGradient id="wg" x1="0" y1="0" x2="1" y2="1"><stop offset="0" stop-color="#52cdf8"/><stop offset="1" stop-color="#0a6ed1"/></linearGradient></defs><path d="M0 0.8 Q0 0 0.8 0 L11 0 L11 11 L0 11 Z M12 0 L22.2 0 Q23 0 23 0.8 L23 11 L12 11 Z M0 12 L11 12 L11 23 L0.8 23 Q0 23 0 22.2 Z M12 12 L23 12 L23 22.2 Q23 23 22.2 23 L12 23 Z" fill="url(#wg)"/></svg>
<!-- search -->
<div class="a" style="left:258px;top:726px;width:220px;height:32px;border-radius:16px;background:#fbfbfb;border:1px solid #d9d9d9"></div>
<svg style="left:270px;top:734px" width="15" height="16" viewBox="0 0 15 16"><circle cx="6.5" cy="6.5" r="5.5" stroke="#1a1a1a" stroke-width="1.8" fill="#f4f4f4"/><path d="M10.5 10.8 L14 14.5" stroke="#1a1a1a" stroke-width="2" stroke-linecap="round"/></svg>
<div class="t" style="left:295px;top:734.5px;font-size:13px;line-height:16px;color:#5a5a5a">Search</div>
<svg style="left:426px;top:729px" width="44" height="26" viewBox="0 0 44 26"><defs><radialGradient id="gold" cx="0.45" cy="0.4" r="0.65"><stop offset="0" stop-color="#d8c27a"/><stop offset="1" stop-color="#b39b4c"/></radialGradient><radialGradient id="crm" cx="0.5" cy="0.4" r="0.7"><stop offset="0" stop-color="#f2e6d6"/><stop offset="1" stop-color="#cfc0ac"/></radialGradient></defs>
<circle cx="12.5" cy="12.7" r="11.2" fill="url(#gold)"/>
<path d="M9 4 Q12 2.5 14 5 Q15.5 8 13.5 11 Q13 13 15 15 Q18 17 19 21 Q14 24.5 8.5 22 Q10.5 17 10 13.5 Q7.5 10 9 4 Z" fill="#e2cf8c" opacity="0.55"/>
<path d="M29.9 2.2 L41.8 3.1 L40.9 14.3 L29.2 13.6 Z" fill="#3550b8"/>
<path d="M31 3.6 L40.5 4.3 L39.7 12.9 L30.4 12.3 Z" fill="url(#crm)"/>
<path d="M28 13.9 L40.2 14.6 L38.3 22.5 L25.2 20.4 Z" fill="#3a56c0"/>
<path d="M28.8 15.2 L38.7 15.8 L37.3 21 L26.8 19.4 Z" fill="#ddd0bf"/>
<ellipse cx="32.5" cy="17.8" rx="3.3" ry="1.6" fill="none" stroke="#9a9080" stroke-width="0.6"/>
</svg>
<!-- task view -->
<svg style="left:490px;top:731px" width="24" height="23" viewBox="0 0 24 23"><rect x="6.3" y="0.3" width="17.4" height="15.4" rx="1" fill="#f7f7f7" stroke="#d4d4d4" stroke-width="0.6"/><rect x="0" y="6" width="18" height="17" rx="1" fill="#202020"/><rect x="6" y="6" width="12" height="10" fill="#bdbdbd"/></svg>
<!-- copilot -->
<svg style="left:530px;top:726px" width="32" height="32" viewBox="0 0 32 32"><defs>
<linearGradient id="cp1" x1="0" y1="0" x2="0" y2="1"><stop offset="0" stop-color="#1ea8f5"/><stop offset="0.45" stop-color="#2c9e7a"/><stop offset="1" stop-color="#f5c800"/></linearGradient>
<linearGradient id="cp2" x1="0" y1="0" x2="0" y2="1"><stop offset="0" stop-color="#b54ee6"/><stop offset="0.5" stop-color="#f0508a"/><stop offset="1" stop-color="#fba050"/></linearGradient>
<linearGradient id="cp3" x1="0" y1="0" x2="1" y2="1"><stop offset="0" stop-color="#1a3ed0"/><stop offset="1" stop-color="#1f78e8"/></linearGradient>
<linearGradient id="cp4" x1="0" y1="0" x2="0" y2="1"><stop offset="0" stop-color="#ff8040"/><stop offset="1" stop-color="#e03a20"/></linearGradient>
</defs>
<path d="M16 4.8 Q20.5 4.8 21.8 8 L23.5 11.5 L16 11.5 Z" fill="url(#cp3)"/>
<path d="M9.5 19 L15.5 19 L14.5 26 Q11 26 10.3 23 Z" fill="url(#cp4)"/>
<path d="M11.5 4.8 L18.8 4.8 Q20.3 4.8 19.8 6.3 L14.8 18.3 Q14 20 12 20 L6 20 Q3.5 20 4 17.5 L7.5 8.5 Q8.8 4.8 11.5 4.8 Z" fill="url(#cp1)"/>
<path d="M20.5 11 L25.5 11 Q28.5 11 27.8 13.5 L24.5 22.5 Q23.3 26 20 26 L14 26 Q12.5 26 13 24.5 L18.2 12.5 Q18.8 11 20.5 11 Z" fill="url(#cp2)"/>
</svg>
<!-- teams -->
<svg style="left:578px;top:729px" width="23" height="24" viewBox="0 0 23 24"><defs>
<linearGradient id="tmh" x1="0" y1="0" x2="1" y2="1"><stop offset="0" stop-color="#8fb4ff"/><stop offset="1" stop-color="#6550e0"/></linearGradient>
<linearGradient id="tmb" x1="0" y1="0" x2="1" y2="1"><stop offset="0" stop-color="#6ab0ff"/><stop offset="1" stop-color="#5a58f0"/></linearGradient>
<linearGradient id="tmr" x1="0" y1="0" x2="1" y2="0"><stop offset="0" stop-color="#4a3ad0"/><stop offset="1" stop-color="#8a70f8"/></linearGradient>
<linearGradient id="tmt" x1="0" y1="0" x2="1" y2="1"><stop offset="0" stop-color="#5070f0"/><stop offset="1" stop-color="#2820a8"/></linearGradient>
</defs>
<circle cx="8.5" cy="3.8" r="3.6" fill="url(#tmh)"/><circle cx="18.3" cy="6.7" r="3" fill="url(#tmh)"/>
<path d="M14.3 11.3 L19.5 11.3 Q22 11.3 22 14 L22 19 Q22 23.5 18 23.5 Q14.3 23.5 14.3 19.5 Z" fill="url(#tmr)"/>
<path d="M5 9.3 L12.3 9.3 Q14.8 9.3 14.8 12 L14.8 19.5 Q14.8 23.8 10 23.8 Q6 23.8 4.8 21 Z" fill="url(#tmb)"/>
<rect x="0.5" y="12" width="10" height="10.5" rx="2" fill="url(#tmt)"/>
<path d="M2.8 14.5 L8.2 14.5 M5.5 14.5 L5.5 20" stroke="#e8e8f8" stroke-width="1.5"/></svg>
<!-- explorer (active) -->
<div class="a" style="left:615px;top:723px;width:38px;height:38px;border-radius:4px;background:#f7f7f7;border:1px solid #e6e6e6"></div>
<svg style="left:622px;top:731px" width="25" height="22" viewBox="0 0 25 22"><path d="M0 1.5 Q0 0 1.5 0 L8 0 L10.5 2.5 L23.5 2.5 Q24.5 2.5 24.5 3.5 L24.5 20 Q24.5 21.5 23 21.5 L1.5 21.5 Q0 21.5 0 20 Z" fill="#e3a40c"/><path d="M0 4.5 L24.5 4.5 L24.5 20 Q24.5 21.5 23 21.5 L1.5 21.5 Q0 21.5 0 20 Z" fill="#fcc93d"/><rect x="4.5" y="14.5" width="15" height="7" rx="1.5" fill="#1c74d0"/><path d="M8 17 L16 17" stroke="#4a92de" stroke-width="1"/></svg>
<div class="a" style="left:626px;top:758px;width:16px;height:3px;border-radius:2px;background:#0067c0"></div>
<!-- edge -->
<svg style="left:666px;top:730px" width="24" height="24" viewBox="3.2 3.2 47.8 47.8">
    <path d="M3.2 24 C3.2 11 14 3.2 27 3.2 C41 3.2 51 13 51 24 C51 30 48 34 44 34.5 C39 35 33 34 31.5 31 C33 29 33 24 28.5 21 C23 17 12 18 3.2 24 Z" fill="url(#eg1)"/>
    <path d="M3.2 24 C10 16 22 14 28.5 21 C24 20 18 24 16.5 31 C15 40 20 47 27 50 C14 50 3.2 40 3.2 27 Z" fill="url(#eg2)"/>
    <path d="M16.5 31 C18 24 24 20 28.5 21 C24 23 22 27 23 31 C25 38 36 42 47 38.4 C43 45 35 50 27 50 C20 49 15.5 42 16.5 31 Z" fill="url(#eg3)"/>
</svg>
<!-- store -->
<svg style="left:710px;top:730px" width="23" height="24" viewBox="0 0 23 24"><defs><linearGradient id="st" x1="0" y1="0" x2="0" y2="1"><stop offset="0" stop-color="#1f5fb0"/><stop offset="1" stop-color="#123d80"/></linearGradient></defs><path d="M6 6 L6 2.5 Q6 1 7.5 1 L15.5 1 Q17 1 17 2.5 L17 6" stroke="#3ab4f0" stroke-width="1.6" fill="none"/><path d="M0.5 6 L22.5 6 L22.5 21 Q22.5 23.5 20 23.5 L3 23.5 Q0.5 23.5 0.5 21 Z" fill="url(#st)"/><rect x="7" y="10" width="4" height="4" fill="#f25022"/><rect x="12" y="10" width="4" height="4" fill="#7fba00"/><rect x="7" y="15" width="4" height="4" fill="#00a4ef"/><rect x="12" y="15" width="4" height="4" fill="#ffb900"/></svg>
<!-- tray -->
<svg style="left:813px;top:738px" width="11" height="7" viewBox="0 0 11 7"><path d="M0.8 6.2 L5.5 1.2 L10.2 6.2" stroke="#222" stroke-width="1.3" fill="none"/></svg>
<div class="t" style="left:844px;top:728px;font-size:12px;color:#222;letter-spacing:-0.6px">ENG</div>
<div class="t" style="left:850px;top:744px;font-size:12px;color:#222;letter-spacing:-0.6px">JA</div>
<svg style="left:886px;top:733px" width="17" height="17" viewBox="0 0 17 17"><path d="M11 1 L1.5 1 Q0.5 1 0.5 2 L0.5 11 Q0.5 12 1.5 12 L13 12" stroke="#222" stroke-width="1.1" fill="none"/><path d="M5 15.5 L11 15.5 M8 12 L8 15.5" stroke="#222" stroke-width="1.1"/><rect x="12" y="1" width="4" height="5" rx="1.5" stroke="#222" stroke-width="1.1" fill="none"/><path d="M14 6 L14 16.5" stroke="#222" stroke-width="1.1"/></svg>
<svg style="left:910px;top:735px" width="17" height="14" viewBox="0 0 17 14"><path d="M0.5 4.5 L3.5 4.5 L7.5 0.8 L7.5 13.2 L3.5 9.5 L0.5 9.5 Z" stroke="#222" stroke-width="1.1" fill="none" stroke-linejoin="round"/><path d="M10 4.5 Q11.5 7 10 9.5 M12.3 2.5 Q15 7 12.3 11.5 M14.5 0.7 Q18.3 7 14.5 13.3" stroke="#222" stroke-width="1.1" fill="none"/></svg>
<div class="t" style="left:944px;top:728px;width:61px;text-align:right;font-size:12px;color:#1a1a1a">8:50 PM</div>
<div class="t" style="left:940px;top:743.5px;width:65px;text-align:right;font-size:12px;color:#1a1a1a">12/10/2025</div>

</body></html>
